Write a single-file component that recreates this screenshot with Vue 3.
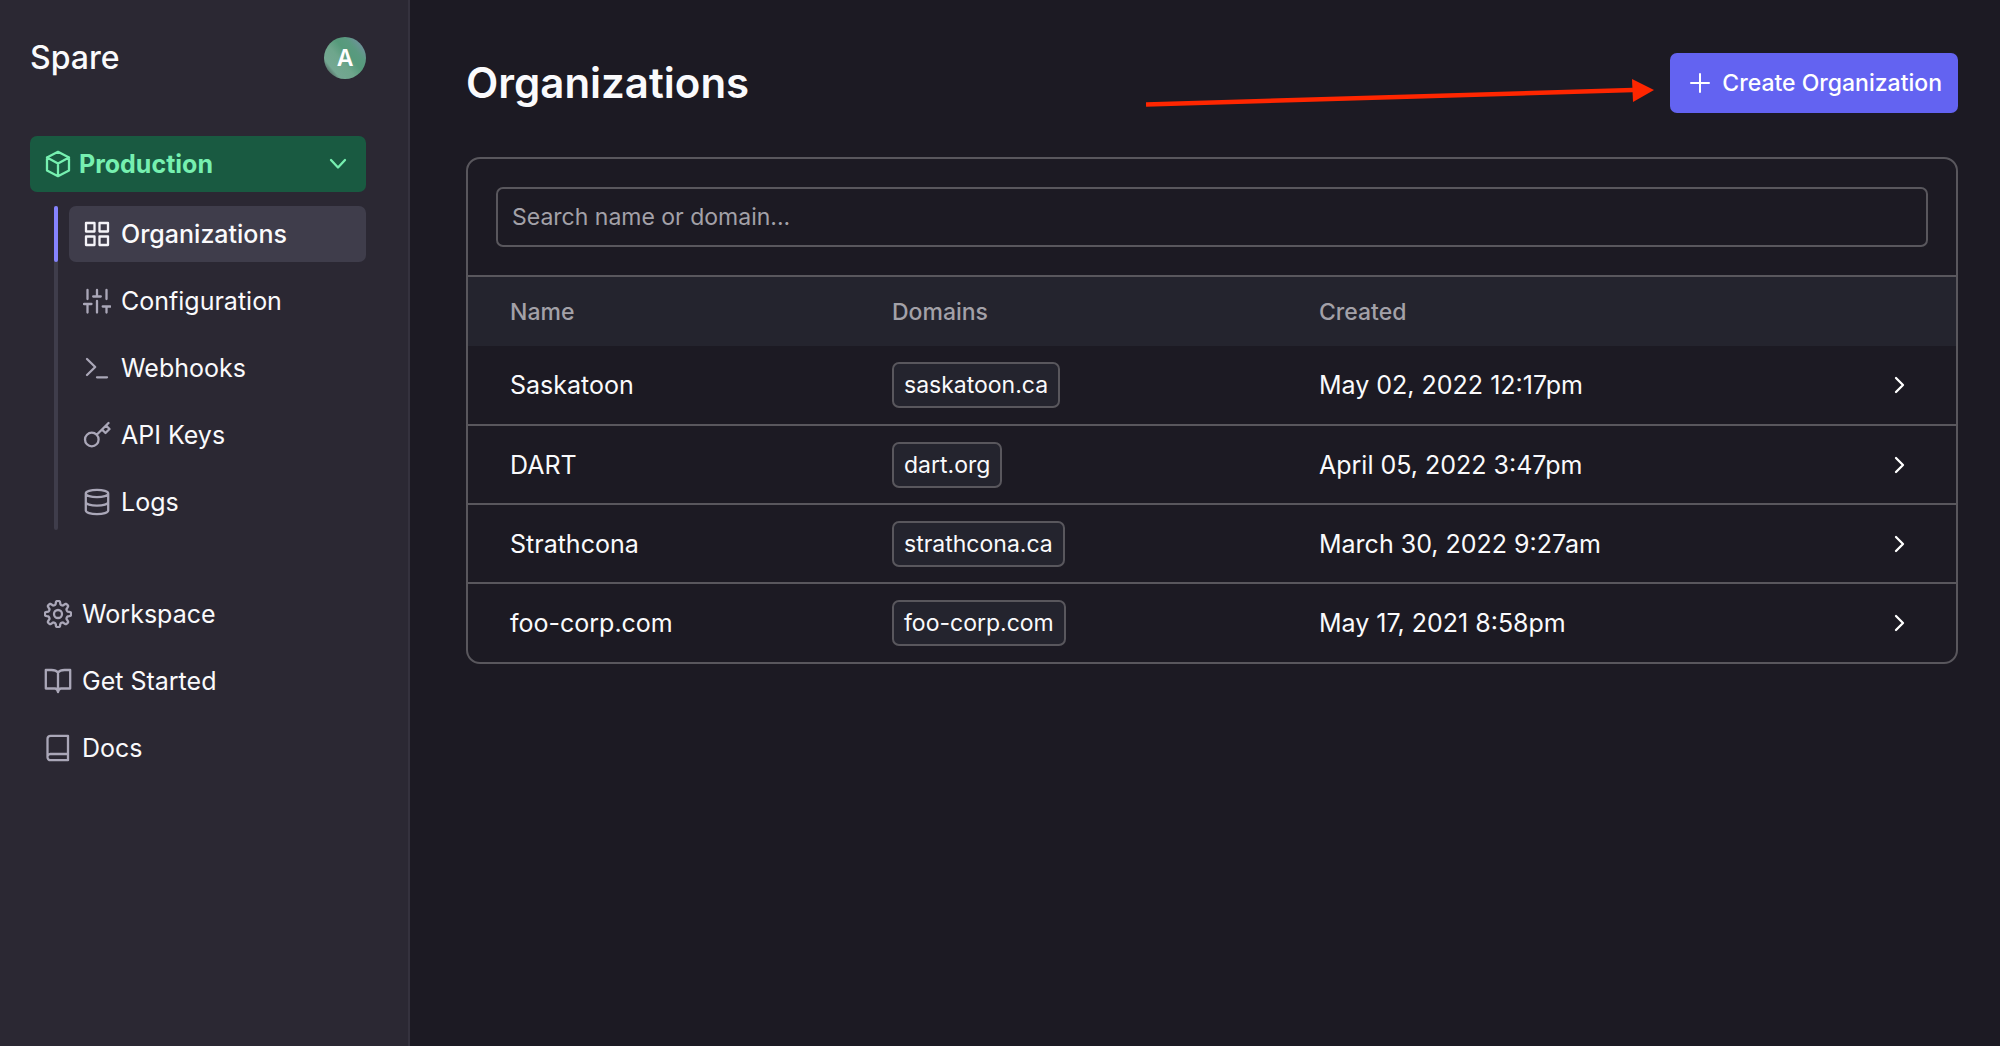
<script setup>
import { ref, computed } from 'vue'

const search = ref('')

const environmentLinks = [
  { label: 'Organizations', icon: 'grid', active: true },
  { label: 'Configuration', icon: 'sliders' },
  { label: 'Webhooks', icon: 'terminal' },
  { label: 'API Keys', icon: 'key' },
  { label: 'Logs', icon: 'database' },
]

const generalLinks = [
  { label: 'Workspace', icon: 'gear' },
  { label: 'Get Started', icon: 'openBook' },
  { label: 'Docs', icon: 'book' },
]

const icons = {
  grid: 'M3 3h8.5v8.5H3zM16.5 3H25v8.5h-8.5zM3 16.5h8.5V25H3zM16.5 16.5H25V25h-8.5z',
  sliders:
    'M4.5 3v9M1 17h7.5M4.5 17v8.5M14 3v6.5M10.2 9.5h7.6M14 14v11.5M23.5 3v9M19.7 19.5h7.5M23.5 19.5v6',
  terminal: 'M4 5l8.2 8L4 21M14 23.3h10',
  key: 'M2 18.5a6.8 6.8 0 1 0 13.6 0a6.8 6.8 0 1 0-13.6 0M13.7 13.7L25.5 2M19 8.5l3.5 3.5l4-4l-3.5-3.5',
  database:
    'M2.8 5.5a11.2 3.7 0 1 0 22.4 0a11.2 3.7 0 1 0-22.4 0M2.8 5.5v17c0 2 5 3.7 11.2 3.7s11.2-1.7 11.2-3.7v-17M2.8 14c0 2 5 3.7 11.2 3.7s11.2-1.7 11.2-3.7',
  openBook:
    'M14 5.5C12.5 3.5 10.5 3 7.5 3H1.8v18.5H11c1.5 0 2.5.6 3 3.5c.5-2.9 1.5-3.5 3-3.5h9.2V3h-5.7c-3 0-5 .5-6.5 2.5zM14 5.5V25',
  book: 'M6.5 1.8H24v24.4H6.5a3 3 0 0 1-3-3V4.8a3 3 0 0 1 3-3zM3.5 22a3 3 0 0 1 3-2H24',
}

// Outline of an eight-toothed cog, centred in the 28-unit icon box.
icons.gear = (() => {
  const steps = 160
  let d = ''
  for (let i = 0; i < steps; i++) {
    const t = (i / steps) * Math.PI * 2
    const wave = Math.tanh(2.2 * Math.cos(8 * t)) / Math.tanh(2.2)
    const r = 11.3 + 1.8 * wave
    d += `${i ? 'L' : 'M'}${(14 + r * Math.cos(t)).toFixed(2)} ${(14 + r * Math.sin(t)).toFixed(2)}`
  }
  return d + 'ZM10 14a4 4 0 1 0 8 0a4 4 0 1 0-8 0'
})()

const organizations = [
  { name: 'Saskatoon', domain: 'saskatoon.ca', created: 'May 02, 2022 12:17pm' },
  { name: 'DART', domain: 'dart.org', created: 'April 05, 2022 3:47pm' },
  { name: 'Strathcona', domain: 'strathcona.ca', created: 'March 30, 2022 9:27am' },
  { name: 'foo-corp.com', domain: 'foo-corp.com', created: 'May 17, 2021 8:58pm' },
]

const visible = computed(() => {
  const q = search.value.trim().toLowerCase()
  return organizations.filter((o) => (o.name + ' ' + o.domain).toLowerCase().includes(q))
})
</script>

<template>
  <div class="app">
    <aside class="sidebar">
      <div class="brand">
        <span class="brand-name">Spare</span>
        <button class="avatar" type="button">A</button>
      </div>

      <button class="environment" type="button">
        <svg class="icon" viewBox="0 0 28 28" aria-hidden="true">
          <path d="M14 1.8L25 7.5v13L14 26.2L3 20.5v-13zM3 7.5l11 6l11-6M14 13.5v12.7" />
        </svg>
        <span>Production</span>
        <svg class="chevron-down" viewBox="0 0 18 12" aria-hidden="true"><path d="M2 2l7 7.5L16 2" /></svg>
      </button>

      <nav class="environment-nav">
        <a v-for="link in environmentLinks" :key="link.label" href="#" class="link" :class="{ active: link.active }">
          <svg class="icon" viewBox="0 0 28 28" aria-hidden="true"><path :d="icons[link.icon]" /></svg>
          <span>{{ link.label }}</span>
        </a>
      </nav>

      <nav class="general-nav">
        <a v-for="link in generalLinks" :key="link.label" href="#" class="link">
          <svg class="icon" viewBox="0 0 28 28" aria-hidden="true"><path :d="icons[link.icon]" /></svg>
          <span>{{ link.label }}</span>
        </a>
      </nav>
    </aside>

    <main class="main">
      <header class="page-header">
        <h1>Organizations</h1>
        <div class="header-action">
          <svg class="pointer" viewBox="0 0 510 32" aria-hidden="true">
            <path d="M0 25.5L487 11" stroke="#ff2600" stroke-width="4.5" />
            <path d="M486 0L508 11L487 23z" fill="#ff2600" />
          </svg>
          <button class="create" type="button">
            <svg viewBox="0 0 20 20" aria-hidden="true"><path d="M10 1v18M1 10h18" /></svg>
            <span>Create Organization</span>
          </button>
        </div>
      </header>

      <section class="card">
        <div class="search">
          <input v-model="search" type="text" placeholder="Search name or domain..." aria-label="Search name or domain" />
        </div>
        <table>
          <thead>
            <tr>
              <th class="col-name">Name</th>
              <th class="col-domains">Domains</th>
              <th>Created</th>
              <th class="col-open"></th>
            </tr>
          </thead>
          <tbody>
            <tr v-for="org in visible" :key="org.name">
              <td>{{ org.name }}</td>
              <td><span class="domain">{{ org.domain }}</span></td>
              <td>{{ org.created }}</td>
              <td class="col-open">
                <svg class="chevron-right" viewBox="0 0 12 18" aria-hidden="true"><path d="M2 2l7 7l-7 7" /></svg>
              </td>
            </tr>
          </tbody>
        </table>
      </section>
    </main>
  </div>
</template>

<style>
body {
  background: #1c1a23;
}
</style>

<style scoped>
.app {
  display: flex;
  min-height: 100vh;
  background: #1c1a23;
  color: #fafafc;
  font-family: Inter, "Liberation Sans", sans-serif;
  font-size: 25px;
  line-height: 32px;
}

.app *,
.app *::before {
  box-sizing: border-box;
}

button,
input {
  font: inherit;
  color: inherit;
}

button {
  border: 0;
  cursor: pointer;
}

svg {
  flex: none;
  fill: none;
  stroke-linecap: round;
  stroke-linejoin: round;
}

.sidebar {
  flex: none;
  width: 410px;
  padding: 37px 42px 37px 30px;
  background: #2b2833;
  border-right: 2px solid #35323e;
}

.brand {
  display: flex;
  align-items: center;
  justify-content: space-between;
  margin-bottom: 57px;
}

.brand-name {
  font-size: 32px;
  font-weight: 500;
}

.avatar {
  width: 42px;
  height: 42px;
  padding: 0;
  border-radius: 50%;
  background: linear-gradient(50deg, #4a5a58 10%, #74a792 22%, #6ea68c 42%, #569a7b 58%, #5a9a80 72%, #7390a0 90%);
  color: #fff;
  font-size: 23px;
  font-weight: 600;
}

.environment {
  display: flex;
  align-items: center;
  gap: 7px;
  width: 100%;
  height: 56px;
  padding: 0 19px 0 14px;
  border-radius: 7px;
  background: #195a41;
  color: #76f0b0;
  font-weight: 700;
}

.icon {
  width: 28px;
  height: 28px;
  stroke: #aaa7b8;
  stroke-width: 2.3;
}

.environment .icon,
.chevron-down {
  stroke: currentColor;
  stroke-width: 2.3;
}

.chevron-down {
  width: 18px;
  height: 12px;
  margin-left: auto;
}

.environment-nav {
  position: relative;
  display: flex;
  flex-direction: column;
  gap: 11px;
  margin: 14px 0 56px 24px;
  padding-left: 15px;
}

.environment-nav::before {
  content: "";
  position: absolute;
  left: 0;
  top: 0;
  bottom: 0;
  width: 4px;
  border-radius: 2px;
  background: #3f3d4b;
}

.general-nav {
  display: flex;
  flex-direction: column;
  gap: 11px;
}

.link {
  position: relative;
  display: flex;
  align-items: center;
  gap: 10px;
  height: 56px;
  padding: 0 14px;
  border-radius: 7px;
  color: inherit;
  text-decoration: none;
}

.link.active {
  background: #3f3d4b;
  font-weight: 500;
}

.link.active .icon {
  stroke: #f4f3f8;
}

.link.active::before {
  content: "";
  position: absolute;
  left: -15px;
  top: 0;
  bottom: 0;
  width: 4px;
  border-radius: 2px;
  background: #8583ff;
}

.main {
  flex: 1;
  min-width: 0;
  padding: 53px 42px 53px 56px;
}

.page-header {
  display: flex;
  align-items: center;
  justify-content: space-between;
  margin-bottom: 44px;
}

h1 {
  margin: 0;
  font-size: 42px;
  line-height: 56px;
  font-weight: 600;
}

.header-action {
  position: relative;
}

.pointer {
  position: absolute;
  right: 100%;
  top: 26px;
  width: 510px;
  height: 32px;
  margin-right: 14px;
  stroke-linecap: butt;
}

.create {
  display: flex;
  align-items: center;
  gap: 12px;
  height: 60px;
  padding: 0 16px 0 20px;
  border-radius: 7px;
  background: #6363f1;
  color: #fff;
  font-size: 23px;
  font-weight: 500;
}

.create svg {
  width: 20px;
  height: 20px;
  stroke: #fff;
  stroke-width: 2;
}

.card {
  border: 2px solid #59575d;
  border-radius: 14px;
  overflow: hidden;
}

.search {
  padding: 28px;
}

.search input {
  display: block;
  width: 100%;
  height: 60px;
  padding: 0 14px;
  border: 2px solid #59575d;
  border-radius: 7px;
  background: transparent;
  font-size: 23px;
}

.search input::placeholder {
  color: #a3a1a8;
  opacity: 1;
}

table {
  width: 100%;
  border-collapse: collapse;
  table-layout: fixed;
}

th,
td {
  padding: 0 0 0 42px;
  text-align: left;
}

th {
  height: 70px;
  border-top: 2px solid #59575d;
  background: #24242e;
  color: #a3a1a8;
  font-size: 23px;
  font-weight: 500;
}

td {
  height: 79px;
}

th + th,
td + td {
  padding-left: 0;
}

tbody tr + tr td {
  border-top: 2px solid #59575d;
}

.col-name {
  width: 424px;
}

.col-domains {
  width: 427px;
}

.col-open {
  width: 62px;
}

.domain {
  display: inline-block;
  padding: 5px 10px;
  border: 2px solid #59575d;
  border-radius: 7px;
  background: #24242e;
  font-size: 23px;
  vertical-align: middle;
}

.chevron-right {
  display: block;
  width: 12px;
  height: 18px;
  stroke: #fff;
  stroke-width: 2.3;
}
</style>
